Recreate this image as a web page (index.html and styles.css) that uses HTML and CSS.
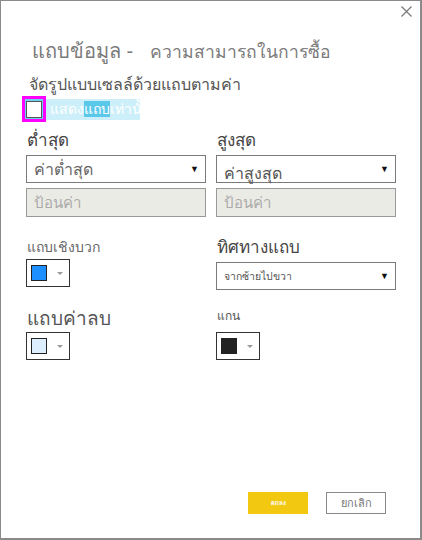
FILE: index.html
```html
<!DOCTYPE html>
<html lang="th">
<head>
<meta charset="utf-8">
<link rel="stylesheet" href="styles.css">
</head>
<body>
<div class="dialog">
  <div class="close-row">
    <svg class="close" width="11" height="11" viewBox="0 0 11 11"><path d="M0.5 0.5 L10.5 10.5 M10.5 0.5 L0.5 10.5" stroke="#7a7a7a" stroke-width="1.3" fill="none"/></svg>
  </div>
  <h1 class="title"><span class="t1">แถบข้อมูล -</span> <span class="t2">ความสามารถในการซื้อ</span></h1>
  <h2 class="section">จัดรูปแบบเซลล์ด้วยแถบตามค่า</h2>
  <div class="check-row">
    <span class="focus"><span class="box"></span></span>
    <span class="sel">แสดง<span class="sel-strong">แถบ</span>เท่านั้น</span>
  </div>
  <div class="grid">
    <div class="field">
      <div class="label lg">ต่ำสุด</div>
      <div class="select"><span>ค่าต่ำสุด</span><span class="arr">▼</span></div>
      <div class="input">ป้อนค่า</div>
    </div>
    <div class="field">
      <div class="label lg">สูงสุด</div>
      <div class="select"><span class="drop">ค่าสูงสุด</span><span class="arr">▼</span></div>
      <div class="input">ป้อนค่า</div>
    </div>
    <div class="field f2">
      <div class="label sm">แถบเชิงบวก</div>
      <div class="picker"><span class="swatch pos"></span><span class="caret"></span></div>
    </div>
    <div class="field f2">
      <div class="label lg dark">ทิศทางแถบ</div>
      <div class="select small"><span>จากซ้ายไปขวา</span><span class="arr">▼</span></div>
    </div>
    <div class="field f3">
      <div class="label xl">แถบค่าลบ</div>
      <div class="picker"><span class="swatch neg"></span><span class="caret"></span></div>
    </div>
    <div class="field f3">
      <div class="label xs">แกน</div>
      <div class="picker"><span class="swatch axis"></span><span class="caret"></span></div>
    </div>
  </div>
  <div class="buttons">
    <button class="btn ok">ตกลง</button>
    <button class="btn cancel">ยกเลิก</button>
  </div>
</div>
</body>
</html>
```
FILE: styles.css
```css
html, body {
  margin: 0;
  padding: 0;
  background: #fff;
}
body {
  font-family: "Liberation Sans", "DejaVu Sans", sans-serif;
}
.dialog {
  box-sizing: border-box;
  width: 422px;
  height: 540px;
  border-style: solid;
  border-color: #8a8a8a;
  border-width: 1px 2px 2px 1px;
  padding: 0 24px 0 25px;
  display: flex;
  flex-direction: column;
}
.close-row {
  display: flex;
  justify-content: flex-end;
  margin: 5px -16px 0 0;
  height: 11px;
}
.title {
  margin: 17px 0 0 6px;
  font-weight: normal;
  color: #7a7a7a;
  line-height: 26px;
  height: 26px;
  white-space: nowrap;
}
.t1 { font-size: 20px; }
.t2 { font-size: 17.5px; margin-left: 8px; }
.section {
  margin: 14px 0 0 3px;
  font-weight: normal;
  font-size: 16px;
  color: #555;
  line-height: 22px;
  height: 22px;
}
.check-row {
  display: flex;
  align-items: center;
  margin: 0 0 0 -4px;
  height: 26px;
}
.focus {
  box-sizing: border-box;
  width: 24px;
  height: 26px;
  border: 3px solid #ff00ff;
  display: flex;
  align-items: center;
  justify-content: center;
  background: #6fd3f0;
}
.box {
  box-sizing: border-box;
  width: 16px;
  height: 17px;
  background: #fff;
  border: 1px solid #555;
}
.sel {
  color: #fff;
  font-size: 14px;
  line-height: 21px;
  white-space: nowrap;
  background: linear-gradient(to right, #cdeffa 0, #cdeffa 94px, #fff 94px);
  padding-left: 4px;
}
.sel-strong { background: #5bc8ea; }
.grid {
  display: grid;
  grid-template-columns: 180px 180px;
  column-gap: 10px;
  margin-top: 8px;
}
.field {
  display: flex;
  flex-direction: column;
}
.label {
  margin-left: 1px;
  white-space: nowrap;
}
.lg { font-size: 17px; color: #444; line-height: 22px; height: 25px; }
.dark { color: #444; }
.sm { font-size: 14px; color: #666; line-height: 20px; height: 22px; }
.xl { font-size: 19px; color: #555; line-height: 26px; height: 26px; }
.xs { font-size: 12px; color: #555; line-height: 16px; height: 26px; padding-top: 2px; box-sizing: border-box; }
.select {
  box-sizing: border-box;
  height: 28px;
  border: 1px solid #7a7a7a;
  display: flex;
  align-items: center;
  justify-content: space-between;
  padding: 0 6px 0 7px;
  font-size: 16px;
  color: #666;
}
.select .drop { margin-top: 8px; color: #555; }
.select.small { font-size: 10.5px; color: #555; }
.arr { font-size: 9px; color: #111; }
.input {
  box-sizing: border-box;
  height: 29px;
  margin-top: 5px;
  border: 1px solid #999;
  background: #ebebe5;
  color: #aaa;
  font-size: 15px;
  line-height: 27px;
  padding-left: 7px;
}
.f2 { margin-top: 20px; }
.f3 { margin-top: 16px; }
.picker {
  box-sizing: border-box;
  width: 44px;
  height: 28px;
  border: 1px solid #333;
  display: flex;
  align-items: center;
  padding-left: 4px;
  gap: 10px;
}
.swatch {
  box-sizing: border-box;
  width: 16px;
  height: 16px;
  border: 1px solid #222;
}
.pos { background: #1e8fff; }
.neg { background: #ddeeff; }
.axis { background: #222; }
.caret {
  width: 0;
  height: 0;
  border-left: 3px solid transparent;
  border-right: 3px solid transparent;
  border-top: 3px solid #999;
}
.buttons {
  margin-top: auto;
  margin-bottom: 24px;
  display: flex;
  justify-content: flex-end;
  gap: 18px;
  padding-right: 10px;
}
.btn {
  box-sizing: border-box;
  width: 60px;
  height: 22px;
  font-family: inherit;
  padding: 0;
}
.ok {
  background: #f2c811;
  border: none;
  color: #fff;
  font-size: 6px;
  font-weight: bold;
}
.cancel {
  background: #fff;
  border: 1px solid #8a8a8a;
  color: #777;
  font-size: 11px;
}
```
